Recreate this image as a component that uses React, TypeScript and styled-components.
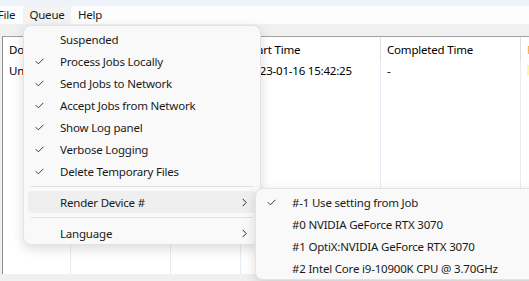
import React from "react";
import styled, { createGlobalStyle } from "styled-components";

const GlobalStyle = createGlobalStyle`
  html, body {
    margin: 0;
    padding: 0;
  }
  body {
    width: 529px;
    height: 281px;
    overflow: hidden;
    background: #f0f0f0;
    font-family: "Noto Sans", "Open Sans", sans-serif;
    font-size: 11.5px;
    letter-spacing: -0.2px;
    color: #000000;
  }
`;

const Window = styled.div`
  position: relative;
  width: 529px;
  height: 281px;
  display: flex;
  flex-direction: column;
  overflow: hidden;
`;

const TitleStrip = styled.div`
  height: 6px;
  background: #eef2f9;
`;

const MenuBar = styled.div`
  height: 18px;
  background: #fdfdfd;
  display: flex;
  margin-left: -10px;
`;

const MenuBarItem = styled.div<{ $active?: boolean; $width: number }>`
  width: ${(p) => p.$width}px;
  display: flex;
  align-items: center;
  justify-content: center;
  padding-bottom: 1px;
  background: ${(p) => (p.$active ? "#f3f3f3" : "transparent")};
  color: #1a1a1a;
`;

const Content = styled.div`
  flex: 1;
  display: flex;
  padding: 12px 0 7px 2px;
`;

const Table = styled.div`
  flex: 1;
  display: flex;
  flex-direction: column;
  background: #ffffff;
  border-top: 1px solid #a0a0a0;
  border-left: 1px solid #8c8c8c;
`;

const columns = "68px 100px 70px 140px 140px 160px";

const HeaderRow = styled.div`
  display: grid;
  grid-template-columns: ${columns};
  height: 24px;
`;

const HeaderCell = styled.div<{ $color?: string }>`
  display: flex;
  align-items: center;
  padding: 0 6px;
  white-space: nowrap;
  overflow: hidden;
  border-right: 1px solid #dedede;
  color: ${(p) => p.$color || "#000000"};
`;

const Body = styled.div`
  flex: 1;
  display: grid;
  grid-template-columns: ${columns};
`;

const BodyColumn = styled.div`
  display: flex;
  flex-direction: column;
  border-right: 1px solid #e4ecf6;
  overflow: hidden;
`;

const Cell = styled.div`
  height: 18px;
  display: flex;
  align-items: center;
  padding: 0 6px;
  white-space: nowrap;
`;

const Progress = styled.div`
  width: 100%;
  height: 10px;
  background: #fff6a3;
`;

const Menu = styled.div<{ $left: number; $top: number; $width: number }>`
  position: absolute;
  left: ${(p) => p.$left}px;
  top: ${(p) => p.$top}px;
  width: ${(p) => p.$width}px;
  padding: 2px 0 0;
  background: #f9f9f9;
  border: 1px solid #e3e3e3;
  border-radius: 8px;
  box-shadow: 0 4px 12px rgba(0, 0, 0, 0.14);
  color: #1a1a1a;
`;

const MenuItem = styled.div<{ $hover?: boolean }>`
  height: 22px;
  margin: 0 4px;
  padding-left: 7px;
  border-radius: 4px;
  display: flex;
  align-items: center;
  white-space: nowrap;
  background: ${(p) => (p.$hover ? "#efefef" : "transparent")};
`;

const CheckSlot = styled.span`
  width: 25px;
  flex: none;
  display: flex;
  align-items: center;
`;

const Label = styled.span`
  flex: 1;
`;

const Chevron = styled.span`
  width: 5px;
  margin-right: 9px;
  display: flex;
  align-items: center;
`;

const Separator = styled.div`
  height: 1px;
  margin: 4px 7px;
  background: #e0e0e0;
`;

const CheckIcon = () => (
  <svg width="9" height="7" viewBox="0 0 9 7">
    <path d="M0.8 3.2 L3.4 5.8 L8.4 0.8" fill="none" stroke="#3a3a3a" strokeWidth="1" />
  </svg>
);

const ChevronIcon = () => (
  <svg width="5" height="9" viewBox="0 0 5 9">
    <path d="M0.6 0.8 L4.2 4.5 L0.6 8.2" fill="none" stroke="#2a2a2a" strokeWidth="1" />
  </svg>
);

type Entry = { label: string; checked?: boolean; submenu?: boolean; hover?: boolean } | "sep";

const queueItems: Entry[] = [
  { label: "Suspended" },
  { label: "Process Jobs Locally", checked: true },
  { label: "Send Jobs to Network", checked: true },
  { label: "Accept Jobs from Network", checked: true },
  { label: "Show Log panel", checked: true },
  { label: "Verbose Logging", checked: true },
  { label: "Delete Temporary Files", checked: true },
  "sep",
  { label: "Render Device #", submenu: true, hover: true },
  "sep",
  { label: "Language", submenu: true },
];

const deviceItems: Entry[] = [
  { label: "#-1 Use setting from Job", checked: true },
  { label: "#0 NVIDIA GeForce RTX 3070" },
  { label: "#1 OptiX:NVIDIA GeForce RTX 3070" },
  { label: "#2 Intel Core i9-10900K CPU @ 3.70GHz" },
];

const MenuList = ({ items }: { items: Entry[] }) => (
  <>
    {items.map((it, i) =>
      it === "sep" ? (
        <Separator key={i} />
      ) : (
        <MenuItem key={i} $hover={it.hover}>
          <CheckSlot>{it.checked && <CheckIcon />}</CheckSlot>
          <Label>{it.label}</Label>
          {it.submenu && (
            <Chevron>
              <ChevronIcon />
            </Chevron>
          )}
        </MenuItem>
      )
    )}
  </>
);

const headers = [
  { title: "Document" },
  { title: "Status" },
  { title: "Progress" },
  { title: "Start Time" },
  { title: "Completed Time" },
  { title: "Render Time", color: "#f2a33a" },
];

const row = ["Untitled", "Rendering", "12%", "2023-01-16 15:42:25", "-"];

export default function App() {
  return (
    <Window>
      <GlobalStyle />
      <TitleStrip />
      <MenuBar>
        <MenuBarItem $width={33}>File</MenuBarItem>
        <MenuBarItem $width={48} $active>
          Queue
        </MenuBarItem>
        <MenuBarItem $width={38}>Help</MenuBarItem>
      </MenuBar>
      <Content>
        <Table>
          <HeaderRow>
            {headers.map((h) => (
              <HeaderCell key={h.title} $color={h.color}>
                {h.title}
              </HeaderCell>
            ))}
          </HeaderRow>
          <Body>
            {row.map((v, i) => (
              <BodyColumn key={i}>
                <Cell>{v}</Cell>
              </BodyColumn>
            ))}
            <BodyColumn>
              <Cell>
                <Progress />
              </Cell>
            </BodyColumn>
          </Body>
        </Table>
      </Content>
      <Menu $left={23} $top={25} $width={236}>
        <MenuList items={queueItems} />
      </Menu>
      <Menu $left={255} $top={188} $width={290}>
        <MenuList items={deviceItems} />
      </Menu>
    </Window>
  );
}
